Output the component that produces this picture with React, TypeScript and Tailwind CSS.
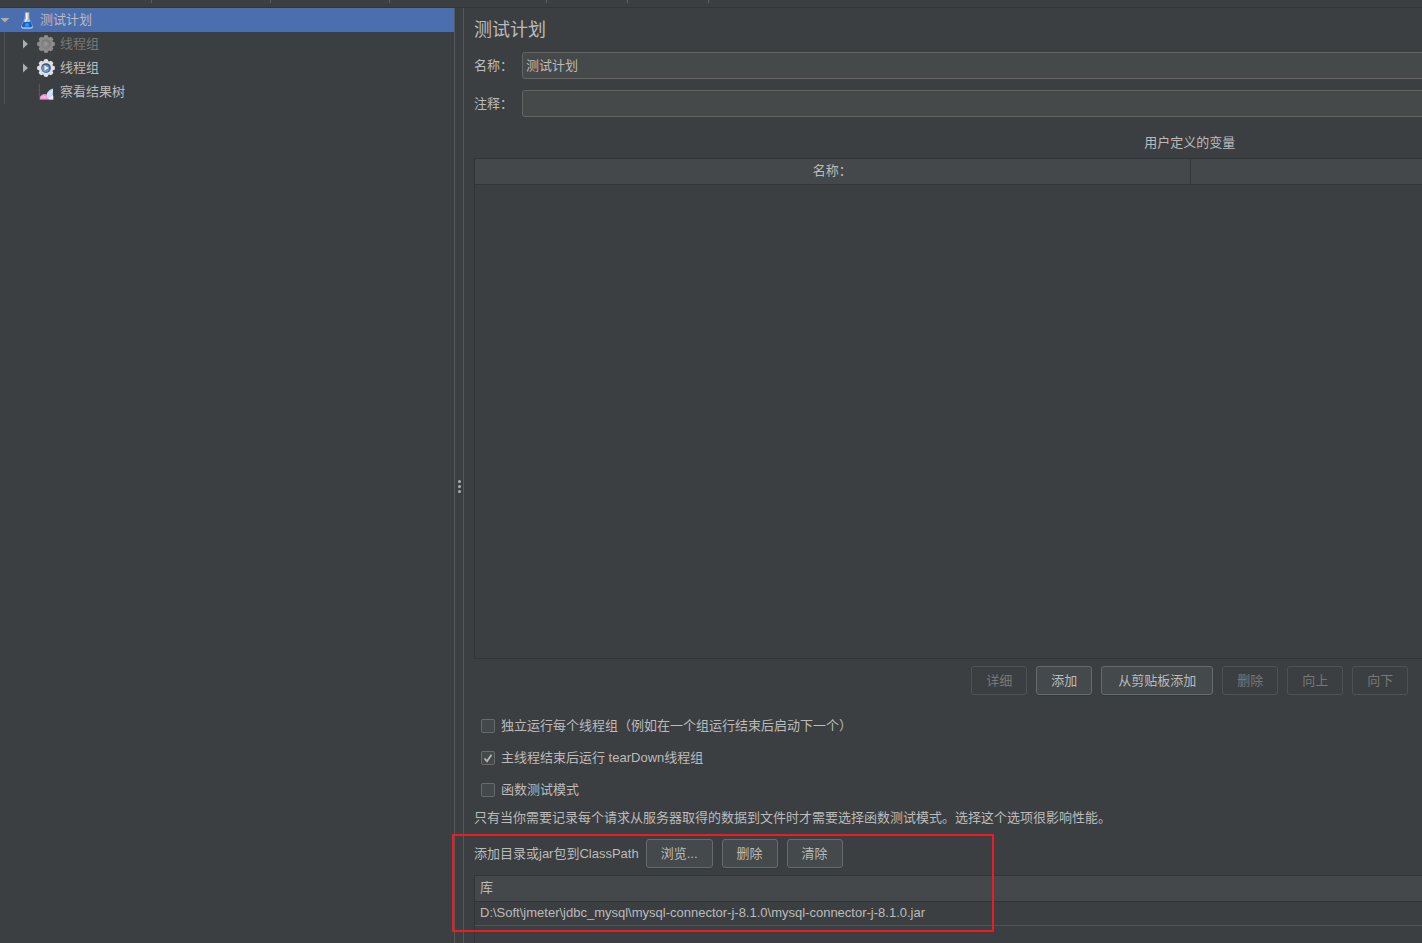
import { useState } from "react";
import clsx from "clsx";

const toolbarGroups = ["w-[152px]", "w-[119px]", "w-[119px]", "w-[157px]", "w-[81px]", "w-[81px]"];

function FlaskIcon() {
  return (
    <svg viewBox="0 0 16 20" className="h-5 w-4 shrink-0">
      <path d="M6 2h4.500v6l3.500 8q.6 2.500-1.500 2.500h-9Q1.400 18.500 2 16l3.500-8z" fill="#7f9bcd" />
      <path d="M6.300 2.500h3.600v6l3 7.500H3.200l3.100-7.500z" fill="#aebfd9" />
      <path d="M7 3h1.600v6l-2.600 4-1.500.5 2.500-5z" fill="#f1f3f5" />
      <path d="M4.600 11.500q3.500 1.200 7 0l1.700 4.500q.2 1.700-1.300 1.700H4q-1.500 0-1.300-1.700z" fill="#1264c8" />
      <path d="M6.500 13.500q1.500-1 3 0l.5 3H6z" fill="#2f9bf5" />
      <path d="M2.700 16.500q.2 1.500 1.500 1.500h7.600q1.300 0 1.500-1.500" stroke="#d3dff0" strokeWidth="1" fill="none" />
      <path d="M6 2.500h4" stroke="#a49c90" strokeWidth="1" />
    </svg>
  );
}

function GearIcon({ disabled }: { disabled?: boolean }) {
  const teeth = [0, 45, 90, 135, 180, 225, 270, 315];
  const body = disabled ? "#8c8c8c" : "#dfe1e4";
  return (
    <svg viewBox="0 0 20 20" className="size-5 shrink-0">
      {teeth.map((deg) => (
        <path key={deg} d="M7 5l1.200-3.600q1.800-.8 3.600 0L13 5z" fill={body} transform={`rotate(${deg} 10 10)`} />
      ))}
      <circle cx="10" cy="10" r="7" fill={body} />
      <circle cx="10" cy="10" r="4.800" fill={disabled ? "#797979" : "#39547f"} />
      <circle cx="9.600" cy="10.600" r="3.800" fill={disabled ? "#858585" : "#6f8fc0"} />
      <path d="M8.500 7.300l4.200 2.700-4.200 2.700z" fill={disabled ? "#969696" : "#e1e9f6"} />
    </svg>
  );
}

function ResultsIcon() {
  return (
    <svg viewBox="0 0 18 18" className="size-[18px] shrink-0">
      <path d="M2.500 1v15.500H16" stroke="#5b5560" fill="none" />
      <path d="M1 3.500h2M1 7.500h2M1 11.500h2" stroke="#505355" />
      <path d="M3 16.500v-3q1.500-2 3.500-2.500t4 1l6 1v3.500z" fill="#e98ad0" />
      <path d="M3.500 15.500q1-3 3-3.200t4 3.200z" fill="#f6b4e2" />
      <path d="M10.500 15q-1.800-3 .2-6t5.300-3.500v5q-1.500 3.500-5.500 4.500z" fill="#c3e2fb" />
      <path d="M10.500 15q3.500-.8 5.500-4.200v5.700h-3.500z" fill="#f5e6f8" />
    </svg>
  );
}

function Arrow({ open }: { open?: boolean }) {
  return (
    <svg viewBox="0 0 10 10" className="size-[10px] shrink-0" fill="#adadad">
      {open ? <path d="M.500 3h9L5 7.500z" /> : <path d="M3 .500v9L8 5z" />}
    </svg>
  );
}

type ButtonProps = { children: string; disabled?: boolean; wide?: boolean };

function Button({ children, disabled, wide }: ButtonProps) {
  return (
    <button
      disabled={disabled}
      className={clsx(
        "h-[29px] shrink-0 rounded-[3px] border",
        wide ? "px-4" : "px-[14px]",
        disabled
          ? "border-[#505152] text-[#777777]"
          : "border-[#696b6b] bg-[#44494b] text-[#bbbbbb] shadow-[0_1px_0_#35383a]"
      )}
    >
      {children}
    </button>
  );
}

type CheckProps = { id: string; label: string; initial?: boolean };

function Check({ id, label, initial = false }: CheckProps) {
  const [checked, setChecked] = useState(initial);

  return (
    <div className="flex h-8 items-center gap-[6px] pl-[7px]">
      <span className="relative flex size-[14px]">
        <input
          id={id}
          type="checkbox"
          checked={checked}
          onChange={(e) => setChecked(e.target.checked)}
          className="size-[14px] appearance-none rounded-[2px] border border-[#6b6b6b] bg-[#43494a]"
        />
        {checked && (
          <svg viewBox="0 0 14 14" className="pointer-events-none absolute inset-0 size-[14px]">
            <path d="M3.500 7.500l2.500 2.700 4.500-6.500" fill="none" stroke="#b4b4b4" strokeWidth="1.800" />
          </svg>
        )}
      </span>
      <label htmlFor={id}>{label}</label>
    </div>
  );
}

function Field({ id, label, value }: { id: string; label: string; value: string }) {
  return (
    <div className="flex items-center">
      <label htmlFor={id} className="w-12 shrink-0">
        {label}
      </label>
      <input
        id={id}
        defaultValue={value}
        className="h-[27px] min-w-0 flex-1 rounded-[3px] border border-[#646464] bg-[#45494a] px-[3px] pb-[2px] outline-none"
      />
    </div>
  );
}

function TestTree() {
  return (
    <nav className="w-[454px] shrink-0">
      <div className="flex h-6 items-center bg-[#4b6eaf]">
        <Arrow open />
        <span className="flex w-[30px] justify-center pl-[3px]">
          <FlaskIcon />
        </span>
        测试计划
      </div>
      <ul className="ml-1 border-l border-[#515456]">
        <li className="flex h-6 items-center pl-[15px] text-[#777777]">
          <Arrow />
          <span className="mr-[4px] ml-[6px]">
            <GearIcon disabled />
          </span>
          线程组
        </li>
        <li className="flex h-6 items-center pl-[15px]">
          <Arrow />
          <span className="mr-[4px] ml-[6px]">
            <GearIcon />
          </span>
          线程组
        </li>
        <li className="flex h-6 items-center gap-[5px] pl-8">
          <ResultsIcon />
          察看结果树
        </li>
      </ul>
    </nav>
  );
}

function ClassPath() {
  return (
    <section className="relative pt-[5px]">
      <div className="flex items-center gap-[9px]">
        <span className="-mr-[2px]">添加目录或jar包到ClassPath</span>
        <Button>浏览...</Button>
        <Button>删除</Button>
        <Button>清除</Button>
      </div>
      <div className="mt-[7px] h-[68px] border-t border-l border-[#323537]">
        <table className="w-full border-collapse text-left">
          <thead>
            <tr className="h-[25px] border-b border-[#323537] bg-[#45484a]">
              <th className="px-[5px] py-0 font-normal">库</th>
            </tr>
          </thead>
          <tbody>
            <tr className="h-6 border-b border-[#515456]">
              <td className="px-[5px] py-0">D:\Soft\jmeter\jdbc_mysql\mysql-connector-j-8.1.0\mysql-connector-j-8.1.0.jar</td>
            </tr>
          </tbody>
        </table>
      </div>
      {/* highlight frame over the classpath block */}
      <div className="pointer-events-none absolute top-0 -left-[22px] h-[98px] w-[542px] border-2 border-[#ed1c24]" />
    </section>
  );
}

function TestPlan() {
  return (
    <div className="flex h-full w-[151%] flex-col">
      <h1 className="mt-2 h-7 text-[18px] leading-7">测试计划</h1>
      <div className="mt-2 flex flex-col gap-[11px]">
        <Field id="name" label="名称：" value="测试计划" />
        <Field id="comment" label="注释：" value="" />
      </div>

      <h2 className="mt-4 h-5 text-center leading-5">用户定义的变量</h2>
      <div className="mt-[5px] min-h-[100px] flex-1 border-t border-b border-l border-[#323537]">
        <table className="w-full table-fixed border-collapse">
          <thead>
            <tr className="h-[25px] border-b border-[#323537] bg-[#45484a]">
              <th className="border-r border-[#323537] p-0 font-normal">名称：</th>
              <th className="p-0" />
            </tr>
          </thead>
        </table>
      </div>

      <div className="mt-[7px] flex justify-center gap-[9px]">
        <Button disabled>详细</Button>
        <Button>添加</Button>
        <Button wide>从剪贴板添加</Button>
        <Button disabled>删除</Button>
        <Button disabled>向上</Button>
        <Button disabled>向下</Button>
      </div>

      <div className="mt-[15px]">
        <Check id="serial" label="独立运行每个线程组（例如在一个组运行结束后启动下一个）" />
        <Check id="teardown" label="主线程结束后运行 tearDown线程组" initial />
        <Check id="functional" label="函数测试模式" />
      </div>
      <p className="mt-[2px] mb-[6px] leading-5">
        只有当你需要记录每个请求从服务器取得的数据到文件时才需要选择函数测试模式。选择这个选项很影响性能。
      </p>
      <ClassPath />
    </div>
  );
}

export default function App() {
  return (
    <div className="flex h-screen flex-col overflow-hidden bg-[#3c3f41] font-['Liberation_Sans','Noto_Sans_CJK_SC',sans-serif] text-[13px] leading-5 text-[#bbbbbb]">
      <header className="flex h-2 shrink-0 border-b border-[#323537]">
        {toolbarGroups.map((width, i) => (
          <div key={i} className={clsx("h-[3px] shrink-0 border-r border-[#5a5d5f]", width)} />
        ))}
      </header>
      <div className="flex min-h-0 flex-1">
        <TestTree />
        <div className="flex w-[10px] shrink-0 flex-col items-center justify-center gap-[2px] border-x border-[#55585a] pt-[22px]">
          <i className="size-[3px] rounded-full bg-[#adadad]" />
          <i className="size-[3px] rounded-full bg-[#adadad]" />
          <i className="size-[3px] rounded-full bg-[#adadad]" />
        </div>
        <main className="min-w-0 flex-1 pl-[10px]">
          <TestPlan />
        </main>
      </div>
    </div>
  );
}
